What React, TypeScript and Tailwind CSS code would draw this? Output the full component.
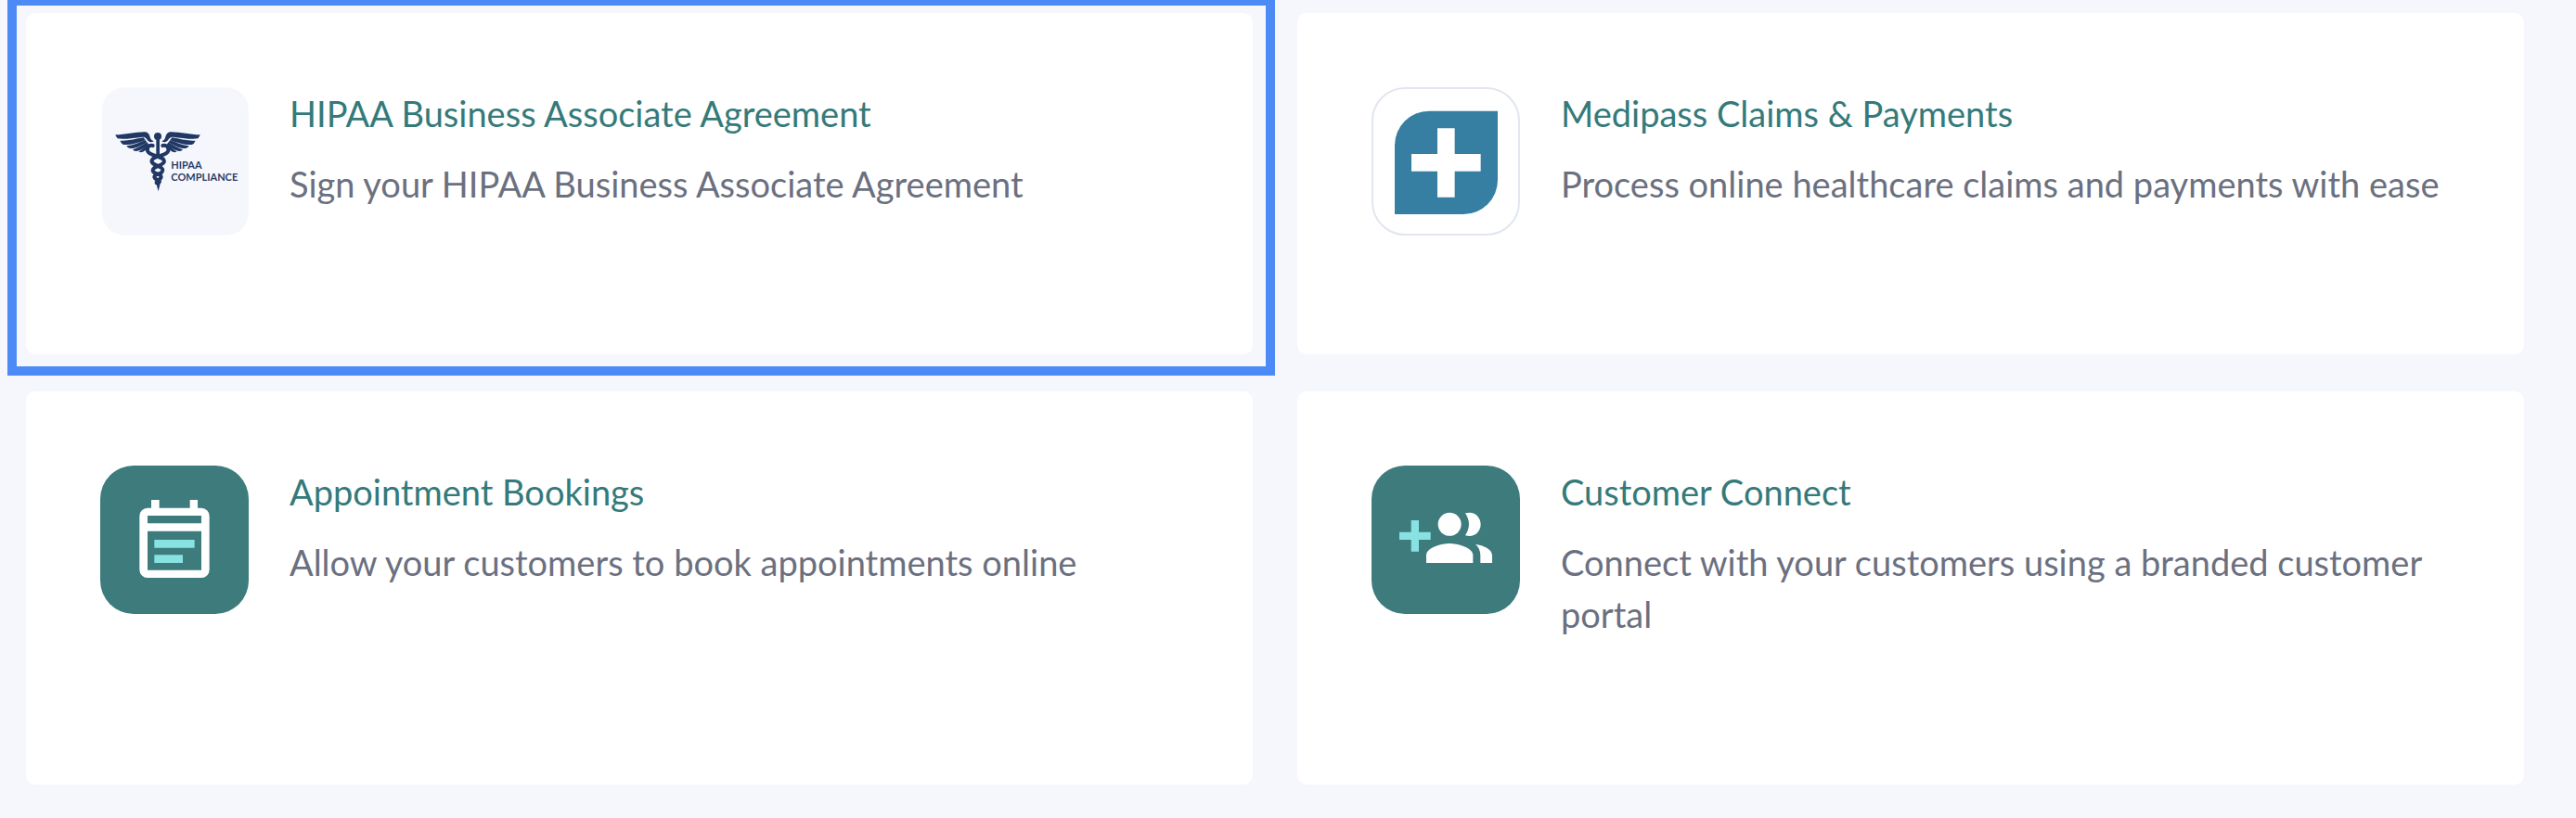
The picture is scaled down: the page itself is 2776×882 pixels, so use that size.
import type { ReactNode } from "react";

function FeatherWing() {
  return (
    <g>
      <path d="M373 436 C405 436 440 426 470 427 C481 429 484 438 486 447 Q490 456 497 457 Q488 463 479 456 C474 449 471 443 460 443 C435 446 400 452 380 448 Q375 443 373 436 Z" />
      <path d="M388 455 C412 457 438 449 464 445 L470 453 C448 462 420 470 400 468 Q392 465 388 455 Z" />
      <path d="M409 472 C430 470 450 461 470 453 L475 460 C456 473 434 482 420 480 Q412 479 409 472 Z" />
      <path d="M429 484 C445 479 460 470 475 460 L480 466 C466 480 450 490 439 489 Q432 489 429 484 Z" />
      <path d="M448 491 C460 484 468 475 478 466 L484 472 C474 485 464 493 455 493 Z" />
    </g>
  );
}

function HipaaIcon() {
  return (
    <svg viewBox="324 282 480 480" className="size-40 shrink-0" role="img" aria-label="HIPAA Compliance">
      <rect x="330" y="283" width="474" height="478" rx="72" fill="#f6f7fd" />
      <g fill="#203864">
        <FeatherWing />
        <g transform="translate(1020 0) scale(-1 1)">
          <FeatherWing />
        </g>
        <circle cx="510" cy="441" r="12" />
        <path d="M505 450 H516 V504 H505 Z" />
        <path d="M504 590 L519 590 L512 619 Z" />
      </g>
      <g fill="none" stroke="#203864" strokeLinecap="round">
        <path strokeWidth="12" d="M494 471 C480 468 475 478 477 488 C482 504 512 502 528 515 C536 526 524 532 508 538 C494 544 491 550 497 557 C506 564 522 563 521 573 C519 582 505 583 506 592" />
        <path strokeWidth="12" d="M526 471 C540 468 546 478 544 488 C539 504 508 502 493 515 C485 526 498 532 513 538 C527 544 529 550 523 557 C515 564 498 563 499 573 C501 582 515 583 516 588" />
      </g>
      <g fill="#2a3d67" fontFamily="Lato, sans-serif" fontWeight="700" fontSize="33">
        <text x="553" y="545">HIPAA</text>
        <text x="553" y="585">COMPLIANCE</text>
      </g>
    </svg>
  );
}

function MedipassIcon() {
  return (
    <div className="size-40 shrink-0 overflow-hidden rounded-[36px] border-2 border-[#e1e6ef] bg-white">
      <svg viewBox="120 108 468 468" className="size-full" aria-hidden="true">
        <path d="M300 179 H522 V402 A111 111 0 0 1 411 513 H189 V290 A111 111 0 0 1 300 179 Z" fill="#367fa2" />
        <path d="M327 235 H383 V318 H467 V374 H383 V458 H327 V374 H243 V318 H327 Z" fill="#fff" />
      </svg>
    </div>
  );
}

function BookingsIcon() {
  return (
    <div className="size-40 shrink-0 overflow-hidden rounded-[36px] bg-[#3d7b7d]">
      <svg viewBox="54 66 480 480" className="size-full" aria-hidden="true">
        <path
          fill="#fff"
          fillRule="evenodd"
          d="M219 177 H245 V203 H344 V177 H369 V203 H381 A26 26 0 0 1 407 229 V403 A26 26 0 0 1 381 429 H207 A26 26 0 0 1 181 403 V229 A26 26 0 0 1 207 203 H219 Z M207 228 V253 H381 V228 Z M207 278 V404 H381 V278 Z"
        />
        <path fill="#88e2e1" d="M229 306 H359 V332 H229 Z M229 355 H321 V381 H229 Z" />
      </svg>
    </div>
  );
}

function ConnectIcon() {
  return (
    <div className="size-40 shrink-0 overflow-hidden rounded-[36px] bg-[#3d7b7d]">
      <svg viewBox="54 66 480 480" className="size-full" aria-hidden="true">
        <path fill="#88e2e1" d="M182 243 H207 V281 H245 V306 H207 V344 H182 V306 H144 V281 H182 Z" />
        <g fill="#fff">
          <circle cx="306.500" cy="256" r="37.500" />
          <path d="M231 381 V356 C231 331 281 318 306 318 C331 318 382 331 382 356 V381 Z" />
          <path d="M357 220 C388 211 407 234 407 256 C407 279 388 301 357 292 C373 269 373 243 357 220 Z" />
          <path d="M390 320 C416 324 444 336 444 356 V381 H406 V356 C406 341 400 329 390 320 Z" />
        </g>
      </svg>
    </div>
  );
}

type AddOn = {
  title: string;
  description: string;
  icon: ReactNode;
  highlighted?: boolean;
};

const addOns: AddOn[] = [
  {
    title: "HIPAA Business Associate Agreement",
    description: "Sign your HIPAA Business Associate Agreement",
    icon: <HipaaIcon />,
    highlighted: true,
  },
  {
    title: "Medipass Claims & Payments",
    description: "Process online healthcare claims and payments with ease",
    icon: <MedipassIcon />,
  },
  {
    title: "Appointment Bookings",
    description: "Allow your customers to book appointments online",
    icon: <BookingsIcon />,
  },
  {
    title: "Customer Connect",
    description: "Connect with your customers using a branded customer portal",
    icon: <ConnectIcon />,
  },
];

function AddOnCard({ title, description, icon, highlighted }: AddOn) {
  return (
    <article className="relative flex items-start gap-11 rounded-[10px] bg-white p-20">
      {icon}
      <div className="flex min-w-0 flex-col gap-5 pb-[76px] text-[38px] leading-14">
        <h2>
          <a href="#" className="text-[#347a7a]">
            {title}
          </a>
        </h2>
        <p className="text-[#6b7080]">{description}</p>
      </div>
      {highlighted && (
        <div className="pointer-events-none absolute -top-[18px] -right-6 -bottom-[23px] -left-5 border-10 border-[#4c8bf5]" />
      )}
    </article>
  );
}

export default function App() {
  return (
    <main className="min-h-screen overflow-hidden bg-[#f6f7fd] pt-3.5 pr-14 pb-9 pl-7 font-['Lato',sans-serif]">
      <div className="grid grid-cols-1 gap-x-12 gap-y-10 lg:grid-cols-2">
        {addOns.map((addOn) => (
          <AddOnCard key={addOn.title} {...addOn} />
        ))}
      </div>
    </main>
  );
}
